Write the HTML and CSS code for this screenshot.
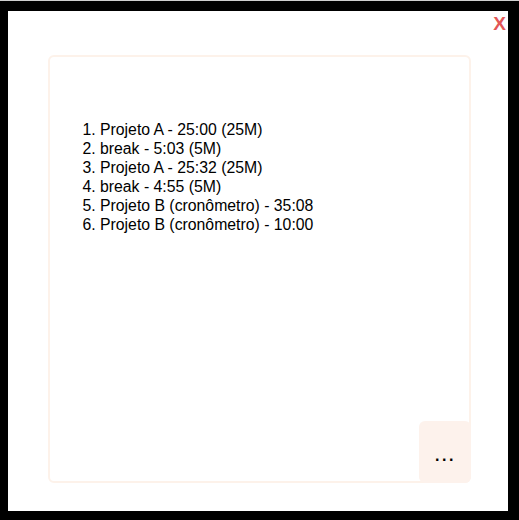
FILE: index.html
```html
<!DOCTYPE html>
<html>
<head>
<meta charset="utf-8">
<link rel="stylesheet" href="styles.css">
</head>
<body>
<div class="frame">
  <div class="modal">
    <div class="topbar"><button class="close">X</button></div>
    <div class="card">
      <ol class="list">
        <li>Projeto A - 25:00 (25M)</li>
        <li>break - 5:03 (5M)</li>
        <li>Projeto A - 25:32 (25M)</li>
        <li>break - 4:55 (5M)</li>
        <li>Projeto B (cronômetro) - 35:08</li>
        <li>Projeto B (cronômetro) - 10:00</li>
      </ol>
      <div class="footer"><button class="more">...</button></div>
    </div>
  </div>
</div>
</body>
</html>
```

FILE: styles.css
```css
html, body {
  margin: 0;
  padding: 0;
  background: #000;
  height: 100%;
}
body {
  font-family: "Liberation Sans", Arial, sans-serif;
  border-top: 1px solid #d0d0d0;
  box-sizing: border-box;
}
.frame {
  padding: 10px 11px 9px 8px;
}
.modal {
  background: #fff;
  height: 500px;
  display: flex;
  flex-direction: column;
}
.topbar {
  display: flex;
  justify-content: flex-end;
  height: 44px;
}
.close {
  background: none;
  border: none;
  color: #e35656;
  font-family: "Liberation Sans", Arial, sans-serif;
  font-weight: bold;
  font-size: 19px;
  padding: 3px 2px 0 0;
  align-self: flex-start;
  line-height: 20px;
}
.card {
  margin: 0 37px 0 40px;
  height: 428px;
  box-sizing: border-box;
  border: 2px solid #fdf2ea;
  border-radius: 6px;
  display: flex;
  flex-direction: column;
  justify-content: space-between;
}
.list {
  margin: 0;
  padding: 63px 0 0 50px;
  font-size: 15.8px;
  line-height: 19px;
  color: #000;
}
.footer {
  display: flex;
  justify-content: flex-end;
}
.more {
  width: 52px;
  height: 62px;
  margin: 0 -2px -2px 0;
  background: #fdf2ec;
  border: none;
  border-radius: 6px;
  font-family: "Liberation Sans", Arial, sans-serif;
  font-size: 16px;
  font-weight: bold;
  letter-spacing: 2.5px;
  padding: 7px 0 0 1px;
  color: #000;
}
```
